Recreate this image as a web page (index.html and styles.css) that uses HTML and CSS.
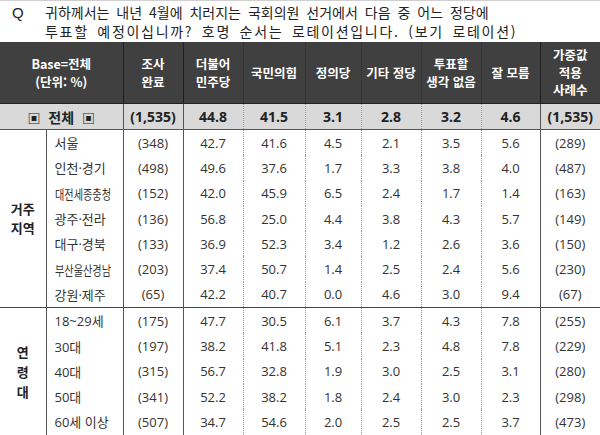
FILE: index.html
```html
<!DOCTYPE html>
<html lang="ko">
<head>
<meta charset="utf-8">
<link rel="stylesheet" href="styles.css">
</head>
<body>
<div class="page">
  <div class="question">
    <span class="q">Q</span>
    <div class="qtext">
      <div class="l1">귀하께서는 내년 4월에 치러지는 국회의원 선거에서 다음 중 어느 정당에</div>
      <div class="l2">투표할 예정이십니까? 호명 순서는 로테이션입니다. (보기 로테이션)</div>
    </div>
  </div>
  <table class="tbl">
    <colgroup>
      <col class="c-grp"><col class="c-sub"><col class="c60"><col class="c60"><col class="c62"><col class="c56"><col class="c60"><col class="c60"><col class="c59"><col class="c60">
    </colgroup>
    <thead>
      <tr class="head">
        <th colspan="2">Base=전체<br>(단위: %)</th>
        <th class="sl">조사<br>완료</th>
        <th class="sl">더불어<br>민주당</th>
        <th class="dl">국민의힘</th>
        <th class="dl">정의당</th>
        <th class="dl">기타 정당</th>
        <th class="dl">투표할<br>생각 없음</th>
        <th class="dl">잘 모름</th>
        <th class="sl">가중값<br>적용<br>사례수</th>
      </tr>
    </thead>
    <tbody>
      <tr class="total">
        <td colspan="2"><span class="box">▣</span> 전체 <span class="box">▣</span></td>
        <td class="sl">(1,535)</td><td class="sl">44.8</td><td class="dl">41.5</td><td class="dl">3.1</td><td class="dl">2.8</td><td class="dl">3.2</td><td class="dl">4.6</td><td class="sl">(1,535)</td>
      </tr>
      <tr class="row first">
        <td class="grp g1" rowspan="7">거주<br>지역</td>
        <td class="sub">서울</td><td class="sl">(348)</td><td class="sl">42.7</td><td class="dl">41.6</td><td class="dl">4.5</td><td class="dl">2.1</td><td class="dl">3.5</td><td class="dl">5.6</td><td class="sl">(289)</td>
      </tr>
      <tr class="row"><td class="sub">인천·경기</td><td class="sl">(498)</td><td class="sl">49.6</td><td class="dl">37.6</td><td class="dl">1.7</td><td class="dl">3.3</td><td class="dl">3.8</td><td class="dl">4.0</td><td class="sl">(487)</td></tr>
      <tr class="row"><td class="sub"><span class="narrow">대전세종충청</span></td><td class="sl">(152)</td><td class="sl">42.0</td><td class="dl">45.9</td><td class="dl">6.5</td><td class="dl">2.4</td><td class="dl">1.7</td><td class="dl">1.4</td><td class="sl">(163)</td></tr>
      <tr class="row"><td class="sub">광주·전라</td><td class="sl">(136)</td><td class="sl">56.8</td><td class="dl">25.0</td><td class="dl">4.4</td><td class="dl">3.8</td><td class="dl">4.3</td><td class="dl">5.7</td><td class="sl">(149)</td></tr>
      <tr class="row"><td class="sub">대구·경북</td><td class="sl">(133)</td><td class="sl">36.9</td><td class="dl">52.3</td><td class="dl">3.4</td><td class="dl">1.2</td><td class="dl">2.6</td><td class="dl">3.6</td><td class="sl">(150)</td></tr>
      <tr class="row"><td class="sub"><span class="narrow">부산울산경남</span></td><td class="sl">(203)</td><td class="sl">37.4</td><td class="dl">50.7</td><td class="dl">1.4</td><td class="dl">2.5</td><td class="dl">2.4</td><td class="dl">5.6</td><td class="sl">(230)</td></tr>
      <tr class="row"><td class="sub">강원·제주</td><td class="sl">(65)</td><td class="sl">42.2</td><td class="dl">40.7</td><td class="dl">0.0</td><td class="dl">4.6</td><td class="dl">3.0</td><td class="dl">9.4</td><td class="sl">(67)</td></tr>
      <tr class="row first">
        <td class="grp g2" rowspan="5">연<br>령<br>대</td>
        <td class="sub">18~29세</td><td class="sl">(175)</td><td class="sl">47.7</td><td class="dl">30.5</td><td class="dl">6.1</td><td class="dl">3.7</td><td class="dl">4.3</td><td class="dl">7.8</td><td class="sl">(255)</td>
      </tr>
      <tr class="row"><td class="sub">30대</td><td class="sl">(197)</td><td class="sl">38.2</td><td class="dl">41.8</td><td class="dl">5.1</td><td class="dl">2.3</td><td class="dl">4.8</td><td class="dl">7.8</td><td class="sl">(229)</td></tr>
      <tr class="row"><td class="sub">40대</td><td class="sl">(315)</td><td class="sl">56.7</td><td class="dl">32.8</td><td class="dl">1.9</td><td class="dl">3.0</td><td class="dl">2.5</td><td class="dl">3.1</td><td class="sl">(280)</td></tr>
      <tr class="row"><td class="sub">50대</td><td class="sl">(341)</td><td class="sl">52.2</td><td class="dl">38.2</td><td class="dl">1.8</td><td class="dl">2.4</td><td class="dl">3.0</td><td class="dl">2.3</td><td class="sl">(298)</td></tr>
      <tr class="row"><td class="sub">60세 이상</td><td class="sl">(507)</td><td class="sl">34.7</td><td class="dl">54.6</td><td class="dl">2.0</td><td class="dl">2.5</td><td class="dl">2.5</td><td class="dl">3.7</td><td class="sl">(473)</td></tr>
    </tbody>
  </table>
</div>
</body>
</html>
```

FILE: styles.css
```css
html, body {
  margin: 0;
  padding: 0;
  background: #ffffff;
}
.page {
  width: 600px;
  height: 435px;
  overflow: hidden;
  border-top: 1px solid #cfcfcf;
  box-sizing: border-box;
  font-family: "Open Sans", "Noto Sans CJK KR", sans-serif;
  color: #333333;
}
.question {
  display: flex;
  height: 41px;
  color: #222222;
  font-family: "Noto Sans CJK KR", sans-serif;
  font-size: 14px;
  line-height: 19px;
}
.q {
  width: 45px;
  padding-left: 12px;
  box-sizing: border-box;
  padding-top: 2px;
  font-family: "Liberation Sans", sans-serif;
  font-size: 15px;
}
.qtext {
  padding-top: 2px;
  word-spacing: 3px;
  white-space: nowrap;
}
.l1 { letter-spacing: 0px; }
.l2 { letter-spacing: 1.7px; }
.tbl {
  width: 600px;
  table-layout: fixed;
  border-collapse: collapse;
  font-size: 13px;
}
.c-grp { width: 46px; }
.c-sub { width: 77px; }
.c60 { width: 60px; }
.c62 { width: 62px; }
.c56 { width: 56px; }
.c59 { width: 59px; }
.tbl th, .tbl td {
  padding: 0;
  text-align: center;
  white-space: nowrap;
}
.head th {
  background: #404040;
  color: #ffffff;
  font-family: "Noto Sans CJK KR", sans-serif;
  font-weight: bold;
  font-size: 12.5px;
  line-height: 17.5px;
  height: 61px;
  border-bottom: 1px solid #222222;
}
.head th.sl { border-left: 1px solid #1e1e1e; }
.head th.dl { border-left: 1px dotted #2a2a2a; }
.total td {
  background: #d9d9d9;
  font-weight: bold;
  font-size: 14px;
  height: 25px;
  color: #222222;
  border-bottom: 1px solid #555555;
}
.total td:first-child {
  font-family: "Noto Sans CJK KR", sans-serif;
}
.box {
  font-size: 13px;
  margin: 0 4px;
}
.sl { border-left: 1px solid #555555; }
.dl { border-left: 1px dotted #9a9a9a; }
.row td { height: 25.3px; }
.row.first td { border-top: 1px solid #444444; }
.total + .row.first td { border-top: none; }
.tbl tbody tr:last-child td { border-bottom: 1px solid #444444; }
.grp {
  font-family: "Noto Sans CJK KR", sans-serif;
  font-weight: bold;
  font-size: 13px;
  border-right: 1px solid #555555;
  color: #222222;
}
.g1 { line-height: 18.5px; }
.g2 { line-height: 20px; }
.tbl tbody tr:last-child td.grp { border-bottom: 1px solid #444444; }
.row td.sub {
  text-align: left;
  padding-left: 8px;
  font-family: "Open Sans", "Noto Sans CJK KR", sans-serif;
  font-size: 13px;
}
.narrow {
  display: inline-block;
  transform: scaleX(0.78);
  transform-origin: left center;
}
```
